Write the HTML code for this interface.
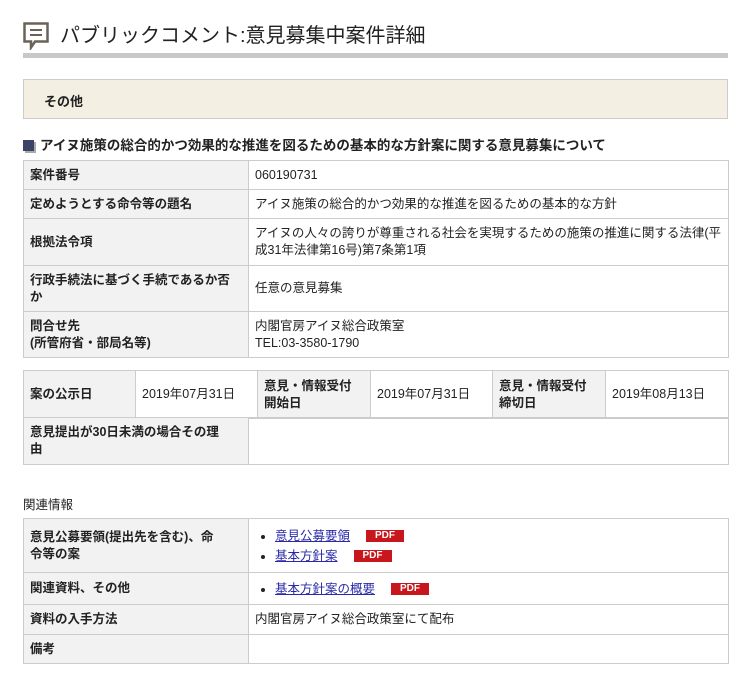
<!DOCTYPE html>
<html><head><meta charset="utf-8"><style>
body{margin:0;background:#fff;font-family:"Liberation Sans","Noto Sans CJK JP",sans-serif;font-size:12.5px;color:#222;}
.wrap{position:relative;width:753px;height:677px;}
.abs{position:absolute;}
h1{position:absolute;left:60px;top:19px;margin:0;font-size:20px;font-weight:normal;color:#222;}
.bar{position:absolute;left:23px;top:53px;width:705px;height:5px;background:#c8c8c8;}
.cat{position:absolute;left:23px;top:79px;width:703px;height:38px;background:#f3efe3;border:1px solid #ccc;}
.cat span{position:absolute;left:20px;top:11px;font-weight:bold;font-size:13px;}
.sub{position:absolute;left:23px;top:134px;font-weight:bold;font-size:13.5px;}
table{position:absolute;left:23px;border-collapse:collapse;table-layout:fixed;}
td{border:1px solid #ccc;padding:0 6px;vertical-align:middle;line-height:17px;}
td.h{background:#f2f2f2;font-weight:bold;}
a{color:#2a2aa8;}
.pdf{display:inline-block;background:#c8161d;color:#fff;font-size:10px;font-weight:bold;width:38px;height:12px;line-height:12px;text-align:center;margin-left:16px;vertical-align:middle;}
ul{margin:0;padding-left:20px;}
li{line-height:20px;}
</style></head><body><div class="wrap">
<svg class="abs" style="left:23px;top:22px" width="26" height="28" viewBox="0 0 26 28"><path d="M1.5 1.5h23v18H12l-4 6v-6H1.5z" fill="none" stroke="#6b6257" stroke-width="2.5"/><path d="M7 8h12M7 13h12" stroke="#6b6257" stroke-width="2"/></svg>
<h1>パブリックコメント:意見募集中案件詳細</h1>
<div class="bar"></div>
<div class="cat"><span>その他</span></div>
<div class="sub"><span style="display:inline-block;width:11px;height:11px;background:#3a4266;margin-right:6px;vertical-align:-1px;box-shadow:2px 2px 0 #aaa"></span>アイヌ施策の総合的かつ効果的な推進を図るための基本的な方針案に関する意見募集について</div>
<table style="top:160px;width:706px">
<col style="width:225px"><col>
<tr style="height:29px"><td class="h">案件番号</td><td>060190731</td></tr>
<tr style="height:29px"><td class="h">定めようとする命令等の題名</td><td>アイヌ施策の総合的かつ効果的な推進を図るための基本的な方針</td></tr>
<tr style="height:47px"><td class="h">根拠法令項</td><td>アイヌの人々の誇りが尊重される社会を実現するための施策の推進に関する法律(平<br>成31年法律第16号)第7条第1項</td></tr>
<tr style="height:46px"><td class="h">行政手続法に基づく手続であるか否<br>か</td><td>任意の意見募集</td></tr>
<tr style="height:46px"><td class="h">問合せ先<br>(所管府省・部局名等)</td><td>内閣官房アイヌ総合政策室<br>TEL:03-3580-1790</td></tr>
</table>
<table style="top:370px;width:706px">
<col style="width:112px"><col style="width:122px"><col style="width:113px"><col style="width:122px"><col style="width:113px"><col>
<tr style="height:48px"><td class="h">案の公示日</td><td>2019年07月31日</td><td class="h">意見・情報受付<br>開始日</td><td>2019年07月31日</td><td class="h">意見・情報受付<br>締切日</td><td>2019年08月13日</td></tr>
</table>
<table style="top:417px;width:706px">
<col style="width:225px"><col>
<tr style="height:47px"><td class="h">意見提出が30日未満の場合その理<br>由</td><td></td></tr>
</table>
<div class="abs" style="left:23px;top:494px">関連情報</div>
<table style="top:518px;width:706px">
<col style="width:225px"><col>
<tr style="height:54px"><td class="h">意見公募要領(提出先を含む)、命<br>令等の案</td><td><ul><li><a href="#">意見公募要領</a><span class="pdf">PDF</span></li><li><a href="#">基本方針案</a><span class="pdf">PDF</span></li></ul></td></tr>
<tr style="height:32px"><td class="h">関連資料、その他</td><td><ul><li><a href="#">基本方針案の概要</a><span class="pdf">PDF</span></li></ul></td></tr>
<tr style="height:30px"><td class="h">資料の入手方法</td><td>内閣官房アイヌ総合政策室にて配布</td></tr>
<tr style="height:29px"><td class="h">備考</td><td></td></tr>
</table>
</div></body></html>
